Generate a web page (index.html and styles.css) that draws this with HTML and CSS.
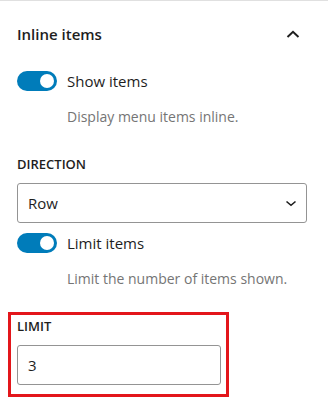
FILE: index.html
```html
<!DOCTYPE html>
<html lang="en">

<head>
  <meta charset="UTF-8" />
  <meta name="viewport" content="width=device-width, initial-scale=1.0" />
  <title>Inline items</title>
  <link rel="stylesheet" href="styles.css">
</head>

<body>
  <div class="painel">
    <div class="painel-header">
      <h2 class="titulo">Inline items</h2>
      <svg class="chevron-up" width="14" height="8" viewBox="0 0 14 8">
        <polyline points="1.5,7 7,1.8 12.5,7" fill="none" stroke="#1e1e1e" stroke-width="2" />
      </svg>
    </div>

    <label class="toggle-row">
      <span class="toggle"><span class="toggle-knob"></span></span>
      <span class="toggle-label">Show items</span>
    </label>
    <p class="ajuda">Display menu items inline.</p>

    <div class="campo">
      <span class="campo-label">DIRECTION</span>
      <div class="select">
        <span>Row</span>
        <svg width="12" height="7" viewBox="0 0 12 7">
          <polyline points="1.5,1.5 6,5.3 10.5,1.5" fill="none" stroke="#1e1e1e" stroke-width="1.6" />
        </svg>
      </div>
    </div>

    <label class="toggle-row toggle-row-junto">
      <span class="toggle"><span class="toggle-knob"></span></span>
      <span class="toggle-label">Limit items</span>
    </label>
    <p class="ajuda">Limit the number of items shown.</p>

    <div class="destaque">
      <span class="campo-label">LIMIT</span>
      <div class="input-numero">3</div>
    </div>
  </div>
</body>

</html>
```

FILE: styles.css
```css
body {
  margin: 0;
  font-family: "Open Sans", "Noto Sans", sans-serif;
  color: #1e1e1e;
  background-color: #fff;
}

.painel {
  border-top: 1px solid #e0e0e0;
  padding: 0 21px 0 17px;
}

/* Cabeçalho com título e seta */
.painel-header {
  display: flex;
  justify-content: space-between;
  align-items: center;
  margin-top: 23px;
  height: 20px;
  padding-right: 7px;
}

.titulo {
  margin: 0;
  font-size: 15px;
  font-weight: 600;
  line-height: 20px;
}

.chevron-up {
  display: block;
}

.toggle-row {
  display: flex;
  align-items: center;
  gap: 10px;
  margin-top: 27px;
  height: 20px;
}

.toggle-row-junto {
  margin-top: 10px;
}

.toggle {
  position: relative;
  width: 40px;
  height: 20px;
  border-radius: 10px;
  background-color: #007cba;
  flex-shrink: 0;
}

.toggle-knob {
  position: absolute;
  top: 3px;
  right: 3px;
  width: 14px;
  height: 14px;
  border-radius: 50%;
  background-color: #fff;
}

.toggle-label {
  font-size: 15px;
  line-height: 20px;
}

.ajuda {
  margin: 16px 0 0 50px;
  font-size: 14px;
  line-height: 20px;
  color: #757575;
}

.campo {
  margin-top: 29px;
}

.campo-label {
  display: block;
  font-size: 13px;
  font-weight: 600;
  line-height: 16px;
}

.select {
  display: flex;
  justify-content: space-between;
  align-items: center;
  margin-top: 11px;
  height: 40px;
  box-sizing: border-box;
  border: 1px solid #949494;
  border-radius: 3px;
  padding: 0 9px 0 10px;
  font-size: 15px;
}

/* Caixa vermelha de destaque */
.destaque {
  margin: 23px 0 0 -9px;
  width: 221px;
  box-sizing: border-box;
  border: 3px solid #e3161b;
  padding: 3px 5px 9px 6px;
}

.input-numero {
  margin-top: 11px;
  height: 40px;
  box-sizing: border-box;
  border: 1px solid #949494;
  border-radius: 3px;
  padding: 0 10px;
  font-size: 15px;
  line-height: 38px;
}
```
